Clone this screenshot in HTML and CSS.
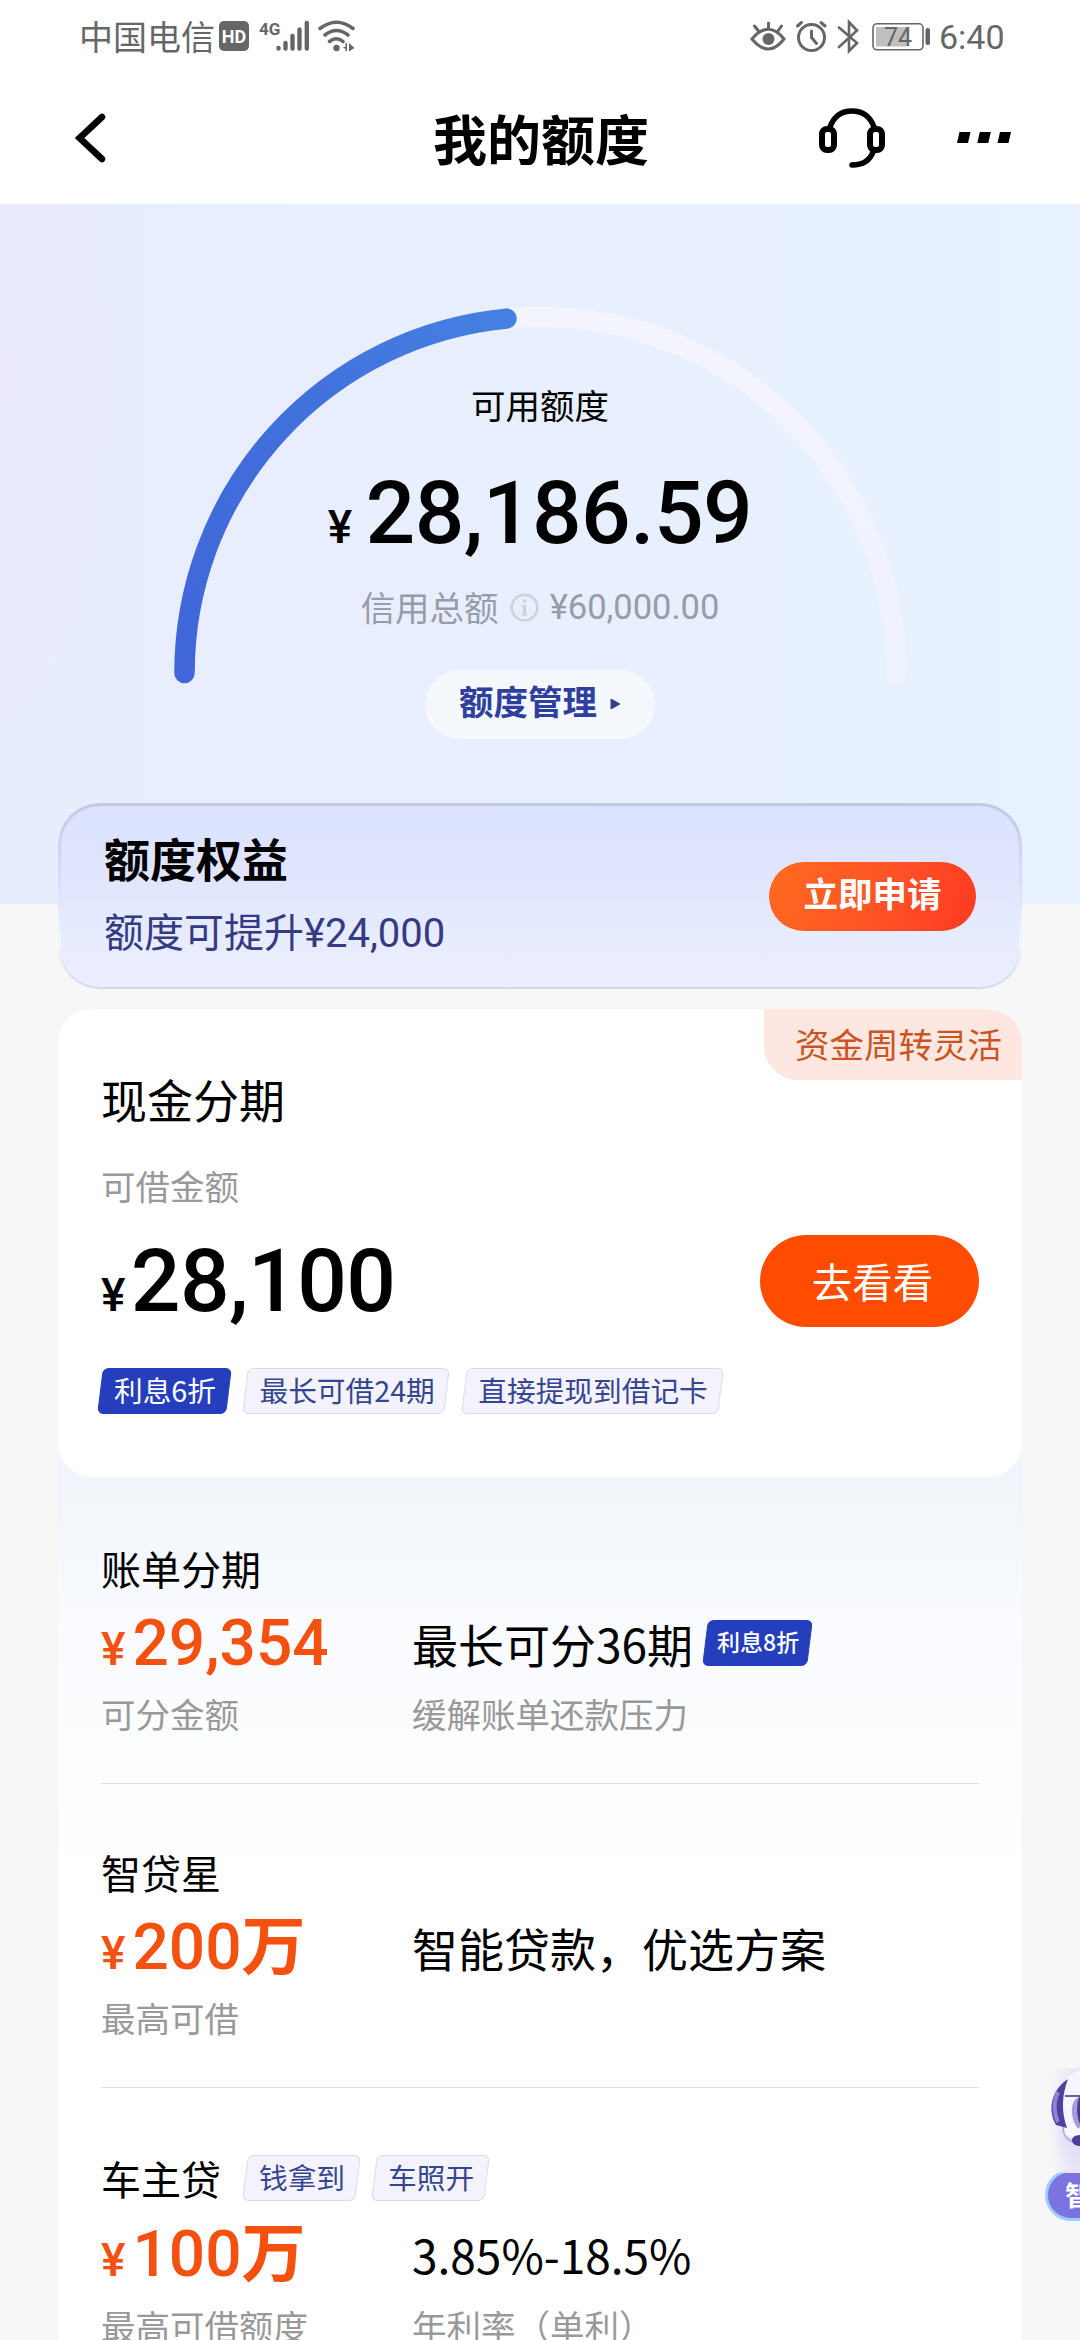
FILE: index.html
```html
<!DOCTYPE html>
<html lang="zh-CN">
<head>
<meta charset="utf-8">
<title>我的额度</title>
<link rel="stylesheet" href="styles.css">
</head>
<body>
<div class="screen">
  <div class="status">
    <span class="carrier">中国电信</span>
    <svg class="sig" width="142" height="40" viewBox="0 0 142 40">
      <rect x="1" y="4" width="30" height="30" rx="5" fill="#666"/>
      <text x="16" y="25.5" class="hd">HD</text>
      <text x="41" y="17.5" class="g4">4G</text>
      <g stroke="#666" stroke-width="4.4" stroke-linecap="round">
        <path d="M60.500 31v.5M67.500 26v5.500M74.500 19v12.500M81.500 12.500v19M88.800 6v25.500"/>
      </g>
      <g fill="none" stroke="#666" stroke-width="3.600" stroke-linecap="round">
        <path d="M102 11.500Q118.500-1 135 11.500M107 18Q118.500 9 130 18M111.500 24.500Q118.500 19 125 24.500"/>
      </g>
      <circle cx="118.500" cy="31" r="3.200" fill="#666"/>
      <path d="M124.500 30h3v-4h1.500v8h-1.500v-2zM131 26l5.500 5-5.500 3.500z" fill="#666"/>
    </svg>
    <svg class="icons" width="182" height="40" viewBox="0 0 182 40">
      <g fill="none" stroke="#666" stroke-width="3" stroke-linecap="round">
        <path d="M2 22Q18.500 2.500 34 22Q18.500 42 2 22zM18.500 11V6M8.500 14L4.500 9M28 14l3.500-5"/>
        <circle cx="61.500" cy="20.500" r="13"/>
        <path d="M61.500 14v6.500l5 6M47.500 9l4-3.500M75 9l-4-3.500"/>
        <path d="M89 10.500L107 26l-8 8V5l8 8.500L89 30" stroke-width="2.600"/>
      </g>
      <circle cx="18.500" cy="22" r="6" fill="#666"/>
      <rect x="123" y="6.800" width="50" height="26" rx="4" fill="none" stroke="#666" stroke-width="1.600"/>
      <rect x="126" y="10" width="32" height="19.500" fill="#bfbfbf"/>
      <rect x="175.500" y="11" width="4.500" height="17" rx="2" fill="#666"/>
      <text x="148" y="28.500" class="bat">74</text>
    </svg>
    <span class="time">6:40</span>
  </div>

  <div class="nav">
    <svg width="32" height="50" viewBox="0 0 32 50"><path d="M27 4L4.500 25L27 46" fill="none" stroke="#000" stroke-width="6.500" stroke-linecap="round"/></svg>
    <h1>我的额度</h1>
    <svg class="headset" width="68" height="62" viewBox="0 0 68 62">
      <g fill="none" stroke="#000" stroke-width="6" stroke-linecap="round">
        <rect x="4" y="22" width="12" height="21" rx="5"/>
        <rect x="52" y="22" width="12" height="21" rx="5"/>
        <path d="M12 20C16 9 24 4 34 4S52 9 56 20M55 45C52 53 45 58 34 58" stroke-width="5.500"/>
      </g>
    </svg>
    <svg width="54" height="12" viewBox="0 0 54 12"><path d="M2.500 0h11l-2.500 11H0zM22.800 0h11l-2.500 11h-11zM43 0h11l-2.500 11h-11z"/></svg>
  </div>

  <section class="hero">
    <svg class="gauge" width="1080" height="700" viewBox="0 0 1080 700">
      <defs>
        <linearGradient id="p" x1="0" y1="1" x2="1" y2="0"><stop offset="0" stop-color="#4066d9"/><stop offset=".5" stop-color="#416fdc"/><stop offset="1" stop-color="#4580e2"/></linearGradient>
        <linearGradient id="t" x1="0" y1="0" x2="0" y2="1"><stop offset="0" stop-color="#f4f4fe"/><stop offset="1" stop-color="#eef2fe"/></linearGradient>
      </defs>
      <g fill="none" stroke-width="20.500" stroke-linecap="round">
        <path d="M184.500 469A356 356 0 0 1 896.500 469" stroke="url(#t)"/>
        <path d="M184.500 469A356 356 0 0 1 506.500 114.600" stroke="url(#p)"/>
      </g>
    </svg>
    <div class="hero-text">
      <div class="label">可用额度</div>
      <div class="big"><span class="yen">¥</span>28,186.59</div>
      <div class="total">信用总额
        <svg width="29" height="29" viewBox="0 0 29 29"><circle cx="14.500" cy="14.500" r="12.800" fill="none" stroke="#cdd1d9" stroke-width="2.500"/><path d="M13 6.500h3v3h-3zM11.500 12h4.500v9.500h-3v-8h-1.500zM11.500 21h6v1.500h-6z" fill="#cdd1d9"/></svg>
        <span class="num">¥60,000.00</span></div>
      <div class="manage">额度管理<svg width="11" height="12" viewBox="0 0 11 12"><path d="M1 1L10 6L1 11z" fill="#2f3f9e" stroke="#2f3f9e" stroke-linejoin="round"/></svg></div>
    </div>
  </section>

  <section class="benefit">
    <div class="benefit-text">
      <h2>额度权益</h2>
      <p>额度可提升<span class="num">¥24,000</span></p>
    </div>
    <div class="apply">立即申请</div>
  </section>

  <section class="cash">
    <div class="badge">资金周转灵活</div>
    <h3>现金分期</h3>
    <div class="sub">可借金额</div>
    <div class="cash-row">
      <div class="big"><span class="yen">¥</span>28,100</div>
      <div class="go">去看看</div>
    </div>
    <div class="tags"><span class="tag solid">利息6折</span><span class="tag">最长可借24期</span><span class="tag">直接提现到借记卡</span></div>
  </section>

  <section class="list">
    <article class="item first">
      <h4>账单分期</h4>
      <div class="cols">
        <div class="amount"><span class="yen">¥</span>29,354</div>
        <div class="desc">最长可分36期<span class="tag solid small">利息8折</span></div>
      </div>
      <div class="cols subs"><div>可分金额</div><div>缓解账单还款压力</div></div>
    </article>
    <article class="item">
      <h4>智贷星</h4>
      <div class="cols">
        <div class="amount"><span class="yen">¥</span>200<span class="unit">万</span></div>
        <div class="desc">智能贷款，优选方案</div>
      </div>
      <div class="cols subs"><div>最高可借</div><div></div></div>
    </article>
    <article class="item last">
      <h4>车主贷<span class="tag">钱拿到</span><span class="tag">车照开</span></h4>
      <div class="cols">
        <div class="amount"><span class="yen">¥</span>100<span class="unit">万</span></div>
        <div class="desc">3.85%-18.5%</div>
      </div>
      <div class="cols subs"><div>最高可借额度</div><div>年利率（单利）</div></div>
    </article>
  </section>

  <div class="assistant">
    <svg width="40" height="105" viewBox="0 0 40 105">
      <defs><radialGradient id="g" cx="1" cy=".5" r=".9"><stop offset="0" stop-color="#d9d3f2"/><stop offset=".6" stop-color="#ebe8f7"/><stop offset="1" stop-color="#f7f7f7" stop-opacity="0"/></radialGradient></defs>
      <rect width="40" height="105" fill="url(#g)"/>
      <path d="M40 2C22 9 12 25 15 45C17 61 26 70 40 72z" fill="#f7f5ff"/>
      <path d="M28 11C10 23 8 43 16 57L27 60C21 43 22 27 28 11z" fill="#51409f"/>
      <path d="M18 24C13 34 14 46 18 54" fill="none" stroke="#8e82d8" stroke-width="4"/>
      <path d="M25 28H40" stroke="#6c5fa8" stroke-width="2"/>
      <path d="M40 31C32 35 33 51 40 59" fill="none" stroke="#a79be0" stroke-width="5"/>
      <path d="M40 27C36 36 36 49 40 56z" fill="#4a3b98"/>
      <path d="M23 59C23 68 28 73 35 74" fill="none" stroke="#b9b0dd" stroke-width="2"/>
      <path d="M40 67C34 67 30 71 33 75C35 78 38 78 40 78z" fill="#4d3d9a"/>
    </svg>
    <div class="assistant-label">智</div>
  </div>
</div>
</body>
</html>
```
FILE: styles.css
```css
* { box-sizing: border-box; margin: 0; padding: 0; font-weight: inherit; }
body { font-family: "Noto Sans CJK SC", "Noto Sans", sans-serif; font-weight: 400; color: #000; }
svg { display: block; flex: none; }
.screen { position: relative; width: 1080px; height: 2340px; overflow: hidden; background: #f7f7f7; white-space: nowrap; }

.status { display: flex; align-items: center; height: 74px; padding-left: 79px; background: #fff; color: #666; }
.carrier { width: 139px; padding-bottom: 2px; font-size: 34px; line-height: 68px; }
.icons { margin-left: 390px; }
.hd { font: 700 18px "Roboto", sans-serif; fill: #fff; text-anchor: middle; }
.g4 { font: 700 17px "Roboto", sans-serif; fill: #666; }
.bat { font: 400 25px "Roboto", sans-serif; fill: #666; text-anchor: middle; }
.time { margin-left: 7px; font: 400 34px/70px "Roboto", sans-serif; }

.nav { display: flex; align-items: center; height: 130px; padding: 0 69px 0 75px; background: #fff; }
.nav h1 { flex: 1; padding: 0 0 3px 326px; font-size: 54px; font-weight: 700; line-height: 60px; }
.nav svg { margin-bottom: 2px; }
.nav .headset { margin-right: 71px; }

.hero { display: grid; height: 700px; background: radial-gradient(ellipse 130px 380px at 0 25%, #ebeafd, transparent), linear-gradient(90deg, #e8edfe, #e8effe 55%, #e7f2fe); }
.gauge, .hero-text { grid-area: 1 / 1; }
.hero-text { display: flex; flex-direction: column; align-items: center; padding-top: 175px; }
.label { font-size: 34.500px; line-height: 50px; }
.big { height: 100px; font: 500 87.500px/100px "Roboto", sans-serif; letter-spacing: -.6px; }
.yen { line-height: 1; }
.hero .big { margin-top: 34px; }
.big .yen { font-size: 46px; margin-right: 6px; }
.hero .yen { margin-right: 14px; }
.total { display: flex; align-items: center; margin-top: 17px; font-size: 34.500px; line-height: 50px; color: #979cab; }
.total svg { margin: 2px 11px 0; }
.num { font-family: "Roboto", sans-serif; }
.total .num { padding-top: 2px; }
.manage { display: flex; align-items: center; justify-content: center; gap: 13px; width: 230px; height: 69px; margin-top: 38px; padding-bottom: 10px; border-radius: 35px; background: #f5f9fe; color: #2f3f9e; font-size: 34.500px; font-weight: 700; }
.manage svg { margin-top: 8px; }

.benefit { position: relative; display: flex; align-items: center; justify-content: space-between; width: 964px; height: 186px; margin: -101px 58px 20px; padding: 0 43px; border: 3px solid transparent; border-bottom-width: 2px; border-radius: 42px;
  background: linear-gradient(#dae2fe, #e2e6fe 45%, #e5ebfe 65%, #eceefe) padding-box, linear-gradient(#c1c8e8, #d7def8 40%, #f2f6ff 75%, #d3d9e8) border-box; }
.benefit-text { padding-bottom: 5px; }
.benefit h2 { font-size: 46px; font-weight: 700; line-height: 60px; }
.benefit p { margin-top: 15px; font-size: 40px; line-height: 56px; color: #353a82; }
.apply { width: 207px; height: 69px; border-radius: 35px; background: linear-gradient(110deg, #ff6a1f, #ff5526 50%, #ff3a22); color: #fff; font-size: 34.500px; font-weight: 700; line-height: 60px; text-align: center; }

.cash { position: relative; width: 964px; height: 468px; margin: 0 58px; padding: 59px 43px 0; border-radius: 34px; background: #fff; }
.badge { position: absolute; top: 0; right: 0; width: 258px; height: 71px; padding-left: 31px; border-radius: 0 34px 0 34px; background: #fde7e0; color: #cb5522; font-size: 34.500px; line-height: 68px; }
.cash h3 { font-size: 46px; line-height: 60px; }
.sub { margin-top: 32px; font-size: 34.500px; line-height: 50px; color: #999; }
.cash-row { display: flex; align-items: center; justify-content: space-between; margin-top: 21px; }
.go { width: 219px; height: 92px; padding-left: 6px; border-radius: 46px; background: #ff4c00; color: #fff; font-size: 40.500px; line-height: 91px; text-align: center; }
.tags { display: flex; gap: 12.500px; margin: 37px 0 0 -3px; }
.tag { position: relative; z-index: 0; height: 46px; padding: 0 15px 0 16px; font-size: 28.700px; line-height: 43px; color: #35468f; }
.tag::before { content: ""; position: absolute; z-index: -1; inset: 0 2px; border: 1px solid #dbdbe8; border-radius: 6px; background: #f4f3fd; transform: skewX(-7deg); }
.solid { color: #fff; }
.solid::before { border-color: #253ebd; background: #253ebd; }
.small { margin-left: 10px; padding: 0 13px 0 14px; font-size: 23px; font-weight: 500; line-height: 42px; }

.list { width: 964px; height: 903px; margin: -40px 58px 0; padding: 40px 43px 0; background: linear-gradient(#eff5fb, #f3f7fc 90px, #f9fbff 180px, #fcfdfe 330px, #fff 450px); }
.item { padding: 63px 0 45px; border-bottom: 1px solid #dfdfdf; }
.first { padding-top: 66px; }
.last { padding-top: 65px; border: 0; }
.item h4 { display: flex; align-items: center; height: 50px; font-size: 40px; line-height: 50px; }
.item h4 .tag { margin-left: 12px; }
.item h4 .tag:first-of-type { margin-left: 22px; }
.cols { display: grid; grid-template-columns: 311px 1fr; align-items: center; height: 70px; margin-top: 15px; }
.last .cols { margin-top: 16px; }
.amount { height: 70px; font: 500 64px/72px "Roboto", "Noto Sans CJK SC", sans-serif; color: #f4500f; }
.amount .yen { font-size: 46px; margin-right: 7px; }
.unit { font-weight: 700; }
.desc { display: flex; align-items: center; padding-bottom: 1px; font-size: 46px; line-height: 60px; }
.cols.subs { height: 50px; margin-top: 10px; font-size: 34.500px; line-height: 50px; color: #999; }
.last .cols.subs { margin-top: 11px; }

.assistant { position: absolute; top: 2068px; left: 1040px; width: 200px; }
.assistant-label { width: 150px; height: 52px; margin: -4px 0 0 5px; padding-left: 17px; border: 3px solid #9fcdfb; border-radius: 26px; background: #7b73df; color: #fff; font-size: 27px; font-weight: 700; line-height: 45px; }
```
